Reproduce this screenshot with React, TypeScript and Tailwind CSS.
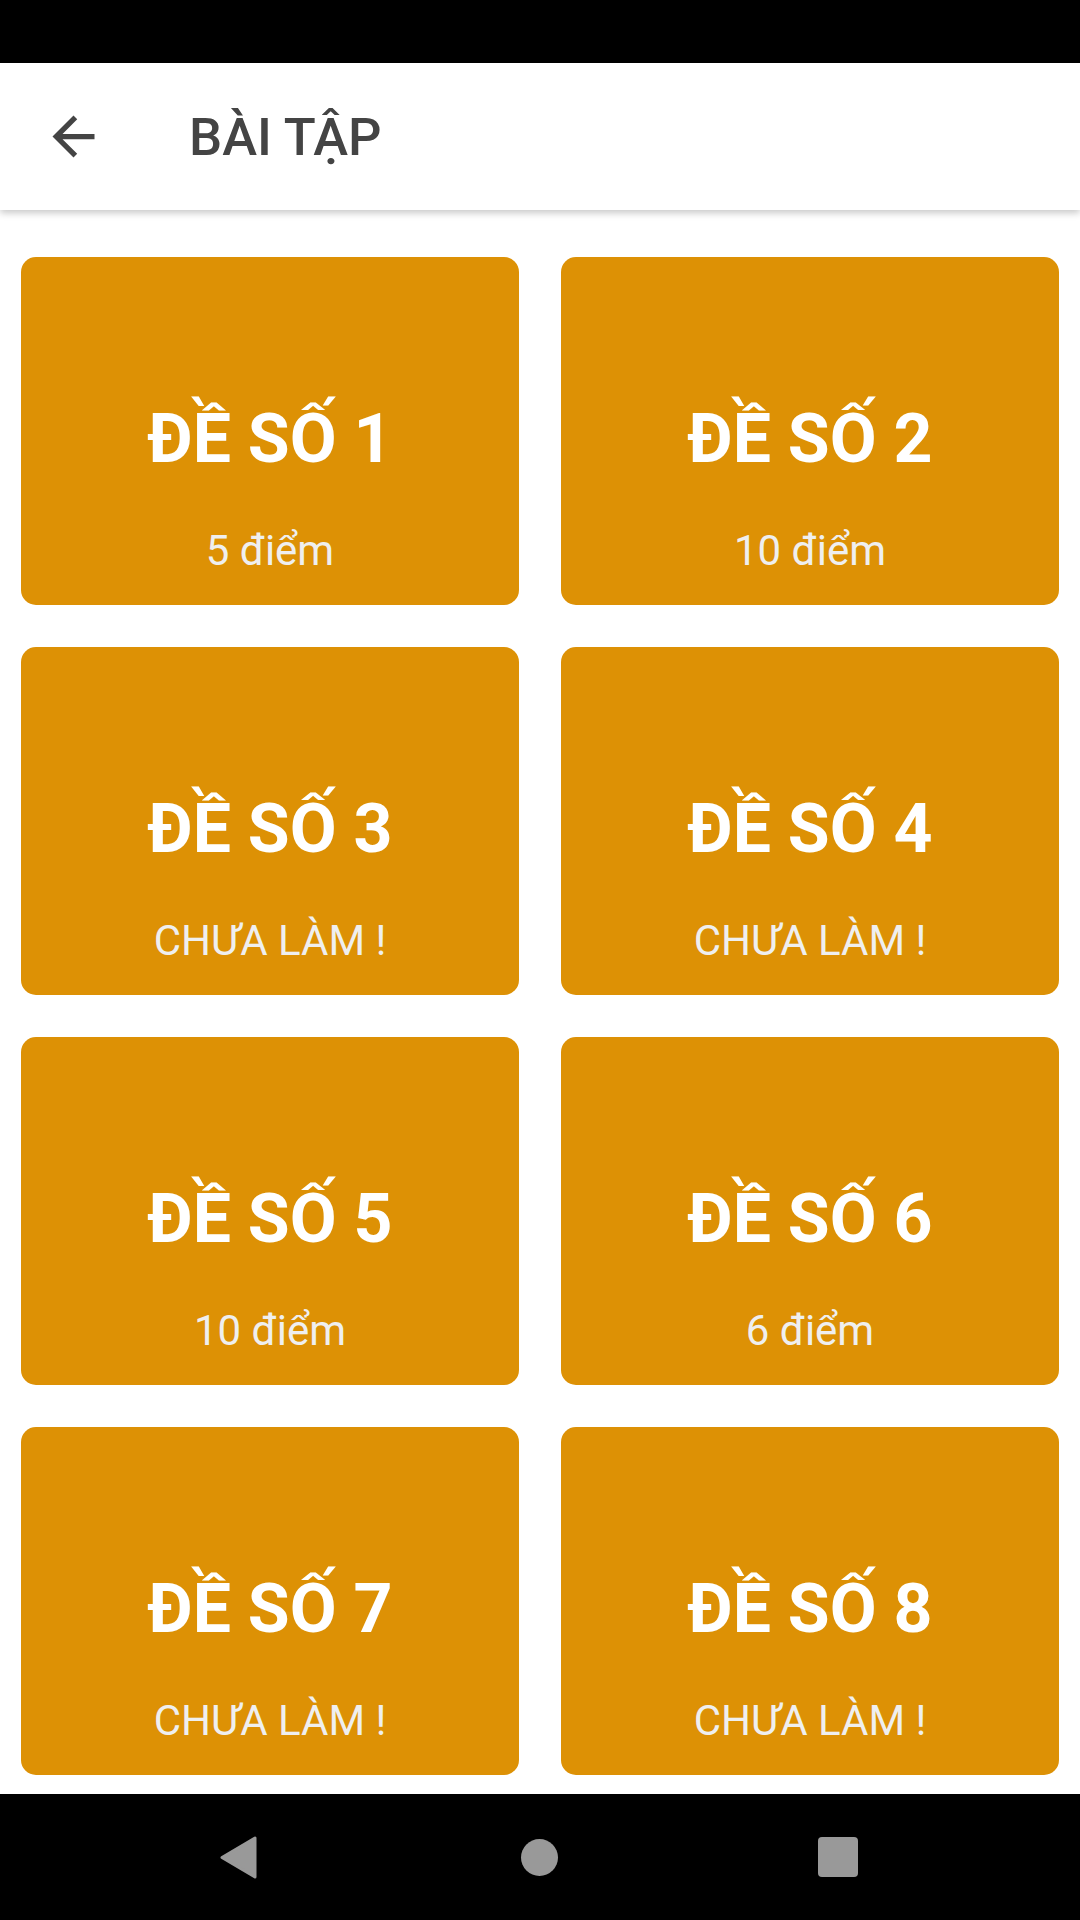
import React from "react";

const cards = [
  { title: "ĐỀ SỐ 1", sub: "5 điểm" },
  { title: "ĐỀ SỐ 2", sub: "10 điểm" },
  { title: "ĐỀ SỐ 3", sub: "CHƯA LÀM !" },
  { title: "ĐỀ SỐ 4", sub: "CHƯA LÀM !" },
  { title: "ĐỀ SỐ 5", sub: "10 điểm" },
  { title: "ĐỀ SỐ 6", sub: "6 điểm" },
  { title: "ĐỀ SỐ 7", sub: "CHƯA LÀM !" },
  { title: "ĐỀ SỐ 8", sub: "CHƯA LÀM !" },
];

export default function App() {
  return (
    <div
      className="w-[1080px] h-[1920px] flex flex-col bg-white overflow-hidden"
      style={{ fontFamily: "Roboto, 'Noto Sans', sans-serif" }}
    >
      <div className="h-[63px] bg-black shrink-0" />
      <div className="h-[147px] shrink-0 bg-white flex items-center relative z-10 shadow-[0_3px_7px_rgba(0,0,0,0.22)]">
        <svg
          className="ml-[42px] w-[63px] h-[63px]"
          viewBox="0 0 24 24"
          fill="#444444"
        >
          <path d="M20 11H7.83l5.59-5.59L12 4l-8 8 8 8 1.41-1.41L7.83 13H20v-2z" />
        </svg>
        <div className="ml-[84px] text-[52.5px] font-medium text-[#444444] leading-[62px]">
          BÀI TẬP
        </div>
      </div>
      <div className="flex-1 pt-[47px] px-[21px]">
        <div className="grid grid-cols-2 gap-x-[42px] gap-y-[42px]">
          {cards.map((c) => (
            <div
              key={c.title}
              className="h-[348px] rounded-[15px] bg-[#dd9105] flex flex-col items-center pt-[141px]"
            >
              <div className="text-[68px] font-bold text-white leading-[82px]">
                {c.title}
              </div>
              <div className="mt-[46px] text-[42px] text-[#efefef] leading-[49px]">
                {c.sub}
              </div>
            </div>
          ))}
        </div>
      </div>
      <div className="h-[126px] shrink-0 bg-black flex items-center pl-[220px]">
        <svg width="37" height="43" viewBox="0 0 37 43">
          <path
            d="M2 21.5 L35 2 L35 41 Z"
            fill="#999999"
            stroke="#999999"
            strokeWidth="3"
            strokeLinejoin="round"
          />
        </svg>
        <div className="ml-[264px] w-[37px] h-[37px] rounded-full bg-[#999999]" />
        <div className="ml-[260px] w-[40px] h-[40px] rounded-[4px] bg-[#999999]" />
      </div>
    </div>
  );
}
